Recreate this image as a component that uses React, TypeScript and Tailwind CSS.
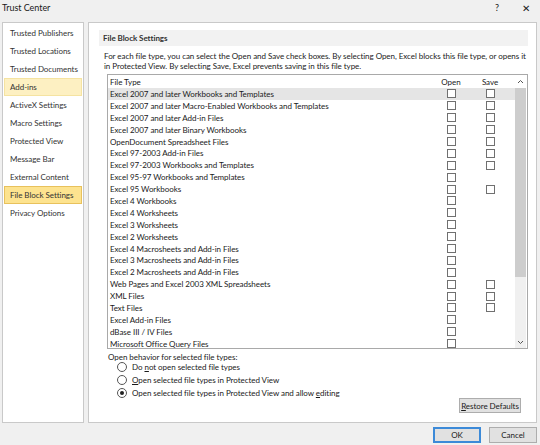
import React from 'react'

const sidebar = [
  'Trusted Publishers',
  'Trusted Locations',
  'Trusted Documents',
  'Add-ins',
  'ActiveX Settings',
  'Macro Settings',
  'Protected View',
  'Message Bar',
  'External Content',
  'File Block Settings',
  'Privacy Options',
]

// [name, has save box] - every row has an open box
const rows: [string, boolean][] = [
  ['Excel 2007 and later Workbooks and Templates', true],
  ['Excel 2007 and later Macro-Enabled Workbooks and Templates', true],
  ['Excel 2007 and later Add-in Files', true],
  ['Excel 2007 and later Binary Workbooks', true],
  ['OpenDocument Spreadsheet Files', true],
  ['Excel 97-2003 Add-in Files', true],
  ['Excel 97-2003 Workbooks and Templates', true],
  ['Excel 95-97 Workbooks and Templates', false],
  ['Excel 95 Workbooks', true],
  ['Excel 4 Workbooks', false],
  ['Excel 4 Worksheets', false],
  ['Excel 3 Worksheets', false],
  ['Excel 2 Worksheets', false],
  ['Excel 4 Macrosheets and Add-in Files', false],
  ['Excel 3 Macrosheets and Add-in Files', false],
  ['Excel 2 Macrosheets and Add-in Files', false],
  ['Web Pages and Excel 2003 XML Spreadsheets', true],
  ['XML Files', true],
  ['Text Files', true],
  ['Excel Add-in Files', false],
  ['dBase III / IV Files', false],
  ['Microsoft Office Query Files', false],
]

function Box() {
  return <div className="w-[9px] h-[9px] border border-[#707070] bg-white" />
}

function Radio({ checked }: { checked?: boolean }) {
  return (
    <div className="w-[10px] h-[10px] rounded-full border border-[#555] bg-white flex items-center justify-center">
      {checked && <div className="w-[4px] h-[4px] rounded-full bg-[#222]" />}
    </div>
  )
}

export default function App() {
  return (
    <div
      className="w-[540px] h-[445px] bg-[#f0f0f0] text-[#1a1a1a] overflow-hidden text-[8px] tracking-[-0.05px] leading-none"
      style={{ fontFamily: 'Lato, "Noto Sans", sans-serif' }}
    >
      {/* title bar */}
      <div className="h-[22px] flex items-start pt-[3px] pl-[2px] pr-[10px]">
        <span className="text-[9px]">Trust Center</span>
        <span className="ml-auto mr-[23px] text-[9px]">?</span>
        <span className="text-[10px]">✕</span>
      </div>

      <div className="flex h-[401px] pl-[2px] pr-[3px] gap-[4px]">
        {/* sidebar */}
        <div className="w-[82px] bg-white border border-[#c9c9c9] pt-[1px] px-[1px] flex flex-col">
          {sidebar.map((s) => (
            <div
              key={s}
              className={`h-[18px] flex items-center pl-[5px] text-[#333] whitespace-nowrap ${
                s === 'Add-ins'
                  ? 'bg-[#fdf0c2] border border-[#f5e3a1]'
                  : s === 'File Block Settings'
                  ? 'bg-[#fde38f] border border-[#e8c15c]'
                  : 'border border-transparent'
              }`}
            >
              {s}
            </div>
          ))}
        </div>

        {/* main */}
        <div className="flex-1 bg-white border border-[#c9c9c9] pt-[7px] pl-[10px] pr-[8px] flex flex-col">
          <div className="h-[16px] bg-[#f2f2f2] flex items-center pl-[4px] font-bold text-[#333]">
            File Block Settings
          </div>
          <p className="mt-[5px] ml-[5px] leading-[10px] text-[#222]">
            For each file type, you can select the Open and Save check boxes. By selecting Open, Excel blocks this file type, or opens it
            in Protected View. By selecting Save, Excel prevents saving in this file type.
          </p>

          <div className="mt-[3px] ml-[8px] h-[275px] border border-[#a9a9a9] flex overflow-hidden">
            <div className="flex-1 flex flex-col">
              <div className="h-[13px] flex items-center shrink-0">
                <span className="pl-[2px] flex-1">File Type</span>
                <span className="w-[40px] text-center">Open</span>
                <span className="w-[38px] text-center mr-[6px]">Save</span>
              </div>
              {rows.map(([name, save], i) => (
                <div
                  key={name}
                  className={`h-[11.9px] shrink-0 flex items-center ${i === 0 ? 'bg-[#e5e5e5]' : ''}`}
                >
                  <span className="pl-[2px] flex-1 whitespace-nowrap">{name}</span>
                  <div className="w-[40px] flex justify-center">
                    <Box />
                  </div>
                  <div className="w-[38px] flex justify-center mr-[6px]">{save && <Box />}</div>
                </div>
              ))}
            </div>
            {/* scrollbar */}
            <div className="w-[11px] bg-[#f0f0f0] flex flex-col items-center mr-[1px]">
              <div className="h-[13px] w-full bg-white flex items-center justify-center">
                <svg width="7" height="5" viewBox="0 0 7 5">
                  <path d="M1 4 L3.5 1.5 L6 4" fill="none" stroke="#555" strokeWidth="1" />
                </svg>
              </div>
              <div className="w-full h-[189px] bg-[#cdcdcd]" />
              <div className="flex-1" />
              <div className="h-[12px] w-full flex items-center justify-center">
                <svg width="7" height="5" viewBox="0 0 7 5">
                  <path d="M1 1 L3.5 3.5 L6 1" fill="none" stroke="#555" strokeWidth="1" />
                </svg>
              </div>
            </div>
          </div>

          <div className="mt-[4px] ml-[9px]">Open behavior for selected file types:</div>
          <div className="ml-[18px] mt-[1px] flex flex-col gap-[3px]">
            <div className="h-[10px] flex items-center gap-[5px]">
              <Radio />
              <span>
                Do <span className="underline">n</span>ot open selected file types
              </span>
            </div>
            <div className="h-[10px] flex items-center gap-[5px]">
              <Radio />
              <span>
                <span className="underline">O</span>pen selected file types in Protected View
              </span>
            </div>
            <div className="h-[10px] flex items-center gap-[5px]">
              <Radio checked />
              <span>
                Open selected file types in Protected View and allow <span className="underline">e</span>diting
              </span>
            </div>
          </div>
          <div className="flex justify-end mt-0 pr-[7px]">
            <button className="h-[15px] w-[62px] bg-[#e1e1e1] border border-[#adadad] flex items-center justify-center text-[8px] whitespace-nowrap">
              <span>
                <span className="underline">R</span>estore Defaults
              </span>
            </button>
          </div>
        </div>
      </div>

      {/* dialog buttons */}
      <div className="flex justify-end gap-[8px] pr-[3px] pt-[4px]">
        <button className="w-[48px] h-[16px] bg-[#e1e1e1] border-2 border-[#3c8ad8] flex items-center justify-center text-[8px]">
          OK
        </button>
        <button className="w-[48px] h-[16px] bg-[#e1e1e1] border border-[#adadad] flex items-center justify-center text-[8px]">
          Cancel
        </button>
      </div>
    </div>
  )
}
